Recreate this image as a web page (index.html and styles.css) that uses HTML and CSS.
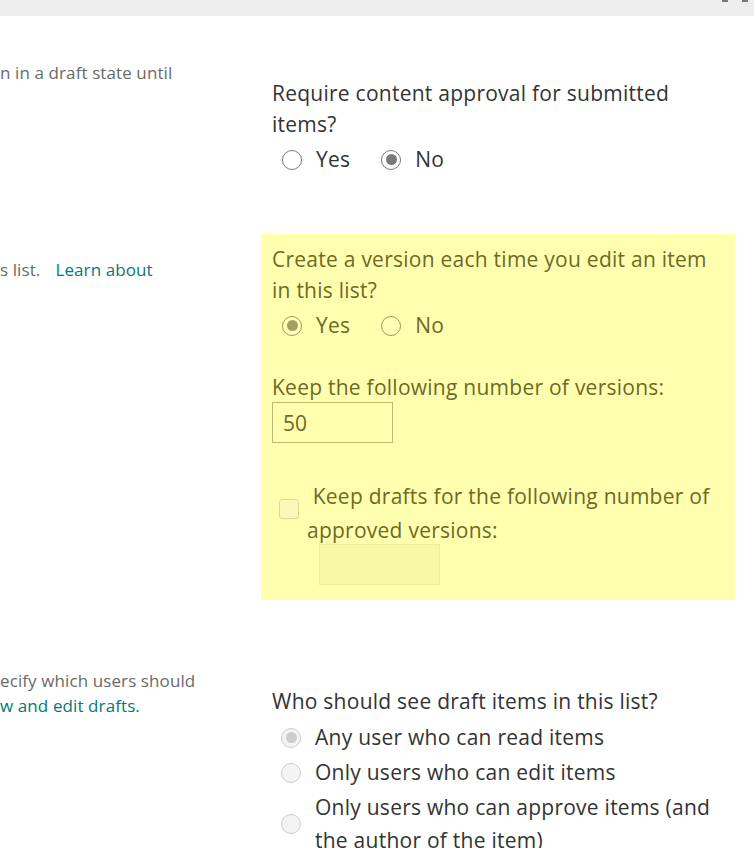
FILE: index.html
```html
<!DOCTYPE html>
<html lang="en">
<head>
<meta charset="utf-8">
<title>Versioning settings</title>
<link rel="stylesheet" href="styles.css">
</head>
<body>
<header class="topbar">
  <span class="tb-icon"></span>
  <span class="tb-icon"></span>
</header>

<main class="settings">
  <section class="row row-approval">
    <div class="desc">
      <p>n in a draft state until</p>
    </div>
    <div class="panel panel-approval">
      <p class="question">Require content approval for submitted items?</p>
      <div class="radio-row">
        <label class="opt"><span class="radio"></span><span>Yes</span></label>
        <label class="opt"><span class="radio checked"></span><span>No</span></label>
      </div>
    </div>
  </section>

  <section class="row row-history">
    <div class="desc desc-history">
      <p>s list.<a class="link learn" href="#">Learn about</a></p>
    </div>
    <div class="panel panel-highlight">
      <p class="question">Create a version each time you edit an item in this list?</p>
      <div class="radio-row">
        <label class="opt"><span class="radio checked"></span><span>Yes</span></label>
        <label class="opt"><span class="radio"></span><span>No</span></label>
      </div>
      <p class="field-label">Keep the following number of versions:</p>
      <input class="textbox" type="text" value="50">
      <div class="check-row">
        <span class="checkbox"></span>
        <div class="check-body">
          <p class="check-label">&nbsp;Keep drafts for the following number of approved versions:</p>
          <input class="textbox textbox-disabled" type="text" value="" disabled>
        </div>
      </div>
    </div>
  </section>

  <section class="row row-security">
    <div class="desc desc-security">
      <p>ecify which users should</p>
      <p><a class="link" href="#">w and edit drafts.</a></p>
    </div>
    <div class="panel panel-security">
      <p class="question">Who should see draft items in this list?</p>
      <div class="radio-list">
        <label class="opt opt-disabled"><span class="radio checked"></span><span class="opt-text">Any user who can read items</span></label>
        <label class="opt opt-disabled"><span class="radio"></span><span class="opt-text">Only users who can edit items</span></label>
        <label class="opt opt-disabled opt-multi"><span class="radio"></span><span class="opt-text">Only users who can approve items (and the author of the item)</span></label>
      </div>
    </div>
  </section>
</main>
</body>
</html>
```
FILE: styles.css
```css
* { box-sizing: border-box; }

html, body {
  margin: 0;
  padding: 0;
  background: #ffffff;
}

body {
  width: 754px;
  height: 848px;
  overflow: hidden;
  font-family: "Open Sans", "Noto Sans", sans-serif;
  color: #333333;
}

p { margin: 0; }

/* top bar */
.topbar {
  height: 16px;
  background: #eeeeee;
  display: flex;
  justify-content: flex-end;
  align-items: flex-start;
  gap: 14px;
  padding-right: 6px;
}

.tb-icon {
  width: 6px;
  height: 2px;
  background: #7a7a7a;
}

/* rows */
.settings {
  display: flex;
  flex-direction: column;
}

.row {
  display: grid;
  grid-template-columns: 261px 474px;
  align-items: start;
}

.row-approval { margin-top: 44px; }
.row-history { margin-top: 44px; }
.row-security { margin-top: 68px; }

/* description column */
.desc {
  font-size: 17px;
  line-height: 25px;
  letter-spacing: 0.1px;
  color: #6a6a6a;
  white-space: nowrap;
}

.desc-history { padding-top: 23px; }

.link {
  color: #03787c;
  text-decoration: none;
}

.learn { margin-left: 15px; }

/* panels */
.panel {
  padding: 10px 11px 15px;
  font-size: 21px;
  letter-spacing: 0.25px;
}

.panel-approval { margin-top: 8px; }
.panel-security { margin-top: 8px; }

.panel-highlight {
  background: #ffffb0;
  color: #6e6a1f;
}

.question {
  line-height: 31px;
}

.radio-row {
  display: flex;
  align-items: center;
  height: 31px;
  margin-top: 4px;
  padding-left: 10px;
  gap: 31px;
}

.opt {
  display: flex;
  align-items: center;
  gap: 14px;
  line-height: 31px;
}

.radio {
  flex: none;
  width: 20px;
  height: 20px;
  border-radius: 50%;
  border: 1.5px solid #7a7a7a;
  background: #ffffff;
  display: flex;
  align-items: center;
  justify-content: center;
}

.radio.checked::after {
  content: "";
  width: 11px;
  height: 11px;
  border-radius: 50%;
  background: #7a7a7a;
}

.panel-highlight .radio {
  border-color: #9c9a5c;
  background: #ffffb8;
}

.panel-highlight .radio.checked::after {
  background: #a3a160;
}

/* text fields */
.field-label {
  margin-top: 32px;
  line-height: 29px;
}

.textbox {
  display: block;
  width: 121px;
  height: 41px;
  margin: 0;
  padding: 0 10px;
  border: 1px solid #bdb96e;
  background: transparent;
  font-family: inherit;
  font-size: 21px;
  color: #6e6a1f;
  outline: none;
}

.check-row {
  display: flex;
  align-items: flex-start;
  margin-top: 36px;
  padding-left: 7px;
  gap: 8px;
}

.checkbox {
  flex: none;
  width: 20px;
  height: 20px;
  margin-top: 20px;
  border-radius: 3px;
  border: 1.5px solid #dcd894;
  background: #f9f9b9;
}

.check-label {
  line-height: 34px;
}

.textbox-disabled {
  margin-top: -3px;
  margin-left: 12px;
  background: #f8f8a9;
  border-color: #efee9f;
}

/* who should see drafts */
.radio-list {
  display: flex;
  flex-direction: column;
  margin-top: 3px;
  padding-left: 9px;
}

.radio-list .opt {
  line-height: 35px;
}

.radio-list .opt-multi {
  margin-top: 1px;
  line-height: 33px;
}

.opt-disabled .radio {
  border-color: #cccccc;
  background: #f4f4f4;
}

.opt-disabled .radio.checked::after {
  background: #cccccc;
}

.opt-text {
  max-width: 409px;
}
```
